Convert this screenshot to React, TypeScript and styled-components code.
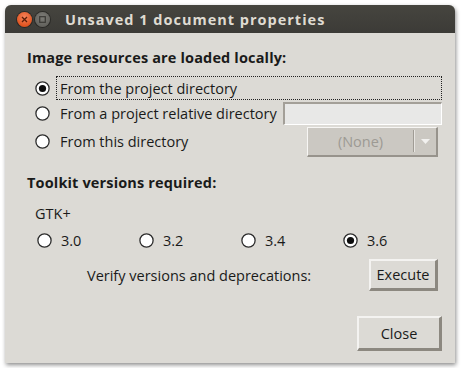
import React from "react";
import styled, { createGlobalStyle } from "styled-components";

const GlobalStyle = createGlobalStyle`
  html, body {
    margin: 0;
    padding: 0;
    background: #ffffff;
  }
  body {
    font-family: "Open Sans", "DejaVu Sans", sans-serif;
    font-size: 14.5px;
    color: #1a1a1a;
  }
`;

const Page = styled.div`
  padding: 5px;
`;

const Window = styled.div`
  width: 450px;
  height: 358px;
  display: flex;
  flex-direction: column;
  background: #dcdad5;
  border-radius: 6px 6px 0 0;
  box-shadow: 1px 2px 4px rgba(0, 0, 0, 0.45);
  overflow: hidden;
`;

const TitleBar = styled.div`
  height: 28px;
  flex: none;
  display: flex;
  align-items: center;
  padding-left: 12px;
  background: linear-gradient(#46453f, #3c3b37);
`;

const TitleButton = styled.div<{ $close?: boolean }>`
  width: 15px;
  height: 15px;
  border-radius: 50%;
  margin-right: 3px;
  display: flex;
  align-items: center;
  justify-content: center;
  background: ${(p) =>
    p.$close
      ? "radial-gradient(circle at 50% 35%, #f6845c, #e05420 70%, #c2410f)"
      : "radial-gradient(circle at 50% 35%, #7d7c77, #64635e 70%, #55544f)"};
  box-shadow: 0 0 0 1px rgba(0, 0, 0, 0.35);
`;

const Title = styled.div`
  margin-left: 12px;
  font-weight: bold;
  font-size: 14.5px;
  letter-spacing: 1px;
  color: #dfdbd2;
  white-space: nowrap;
`;

const Content = styled.div`
  flex: 1;
  display: flex;
  flex-direction: column;
  padding: 16px 13px 12px 22px;
`;

const Heading = styled.div<{ $top?: number }>`
  font-weight: bold;
  line-height: 18px;
  letter-spacing: 0.15px;
  margin-top: ${(p) => p.$top ?? 0}px;
`;

const OptionList = styled.div`
  margin-top: 9px;
  display: flex;
  flex-direction: column;
  gap: 1px;
`;

const OptionRow = styled.div<{ $h: number }>`
  height: ${(p) => p.$h}px;
  display: flex;
  align-items: center;
  padding-left: 8px;
`;

const RadioBox = styled.span<{ $gap: number }>`
  width: 15px;
  height: 15px;
  flex: none;
  margin-right: ${(p) => p.$gap}px;
  display: inline-flex;
`;

const OptionLabel = styled.span<{ $focus?: boolean }>`
  display: flex;
  align-items: center;
  height: 24px;
  box-sizing: border-box;
  padding: 0 4px 0 ${(p) => (p.$focus ? 3 : 4)}px;
  border: ${(p) => (p.$focus ? "1px dotted #222" : "none")};
  flex: ${(p) => (p.$focus ? 1 : "none")};
  white-space: nowrap;
`;

const Entry = styled.div`
  flex: 1;
  height: 23px;
  margin-left: 2px;
  box-sizing: border-box;
  background: #e8e8e7;
  border-style: solid;
  border-width: 2px 1px 1px 2px;
  border-color: #a39f98 #ffffff #ffffff #a39f98;
`;

const Combo = styled.div`
  margin-left: auto;
  margin-right: 4px;
  width: 131px;
  height: 30px;
  box-sizing: border-box;
  display: flex;
  align-items: center;
  background: #cbc8c2;
  border-style: solid;
  border-width: 1px 2px 2px 1px;
  border-color: #f7f6f4 #97938c #97938c #f7f6f4;
`;

const ComboText = styled.span`
  flex: 1;
  text-align: center;
  color: #9d9a94;
`;

const ComboSep = styled.span`
  width: 1px;
  height: 22px;
  background: #a09c95;
  box-shadow: 1px 0 0 #e8e6e2;
`;

const ComboArrow = styled.span`
  width: 22px;
  display: flex;
  justify-content: center;
`;

const SubLabel = styled.div`
  margin-top: 13px;
  padding-left: 8px;
  line-height: 18px;
`;

const VersionGrid = styled.div`
  margin-top: 8px;
  padding-left: 10px;
  display: grid;
  grid-template-columns: repeat(4, 102px);
  height: 18px;
`;

const VersionItem = styled.label`
  display: flex;
  align-items: center;
`;

const VerifyRow = styled.div`
  margin-top: 10px;
  display: flex;
  align-items: center;
  padding-left: 60px;
  padding-top: 1px;
`;

const Button = styled.button<{ $w: number; $h: number }>`
  width: ${(p) => p.$w}px;
  height: ${(p) => p.$h}px;
  font-family: inherit;
  font-size: 14.5px;
  color: #1a1a1a;
  background: #dcdad5;
  box-sizing: border-box;
  padding: 0;
  border-style: solid;
  border-width: 2px 3px 3px 2px;
  border-color: #f4f3f1 #8c8880 #8c8880 #f4f3f1;
`;

const ExecuteButton = styled(Button)`
  margin-left: auto;
  margin-right: 4px;
  margin-top: -1px;
`;

const Footer = styled.div`
  margin-top: auto;
  display: flex;
  justify-content: flex-end;
`;

function Radio({ checked }: { checked?: boolean }) {
  return (
    <svg width="15" height="15" viewBox="0 0 15 15">
      <circle cx="7.5" cy="7.5" r="6.6" fill="#ffffff" stroke="#2e2e2e" strokeWidth="1.3" />
      {checked && <circle cx="7.5" cy="7.5" r="3.6" fill="#0d0d0d" />}
    </svg>
  );
}

const versions = [
  { v: "3.0", checked: false },
  { v: "3.2", checked: false },
  { v: "3.4", checked: false },
  { v: "3.6", checked: true },
];

export default function App() {
  return (
    <Page>
      <GlobalStyle />
      <Window>
        <TitleBar>
          <TitleButton $close>
            <svg width="7" height="7" viewBox="0 0 7 7">
              <path d="M1 1L6 6M6 1L1 6" stroke="#5b1e08" strokeWidth="1.3" />
            </svg>
          </TitleButton>
          <TitleButton>
            <svg width="7" height="7" viewBox="0 0 7 7">
              <rect x="0.7" y="0.7" width="5.6" height="5.6" fill="none" stroke="#3a3935" strokeWidth="1.2" />
            </svg>
          </TitleButton>
          <Title>Unsaved 1 document properties</Title>
        </TitleBar>
        <Content>
          <Heading>Image resources are loaded locally:</Heading>
          <OptionList>
            <OptionRow $h={24}>
              <RadioBox $gap={6}>
                <Radio checked />
              </RadioBox>
              <OptionLabel $focus>From the project directory</OptionLabel>
            </OptionRow>
            <OptionRow $h={24}>
              <RadioBox $gap={6}>
                <Radio />
              </RadioBox>
              <OptionLabel>From a project relative directory</OptionLabel>
              <Entry />
            </OptionRow>
            <OptionRow $h={31}>
              <RadioBox $gap={6}>
                <Radio />
              </RadioBox>
              <OptionLabel>From this directory</OptionLabel>
              <Combo>
                <ComboText>(None)</ComboText>
                <ComboSep />
                <ComboArrow>
                  <svg width="9" height="5" viewBox="0 0 9 5">
                    <path d="M0 0H9L4.5 5Z" fill="#f2f1ef" />
                  </svg>
                </ComboArrow>
              </Combo>
            </OptionRow>
          </OptionList>

          <Heading $top={17}>Toolkit versions required:</Heading>
          <SubLabel>GTK+</SubLabel>
          <VersionGrid>
            {versions.map((item) => (
              <VersionItem key={item.v}>
                <RadioBox $gap={9}>
                  <Radio checked={item.checked} />
                </RadioBox>
                {item.v}
              </VersionItem>
            ))}
          </VersionGrid>
          <VerifyRow>
            <span>Verify versions and deprecations:</span>
            <ExecuteButton $w={69} $h={32}>Execute</ExecuteButton>
          </VerifyRow>
          <Footer>
            <Button $w={85} $h={35}>Close</Button>
          </Footer>
        </Content>
      </Window>
    </Page>
  );
}
